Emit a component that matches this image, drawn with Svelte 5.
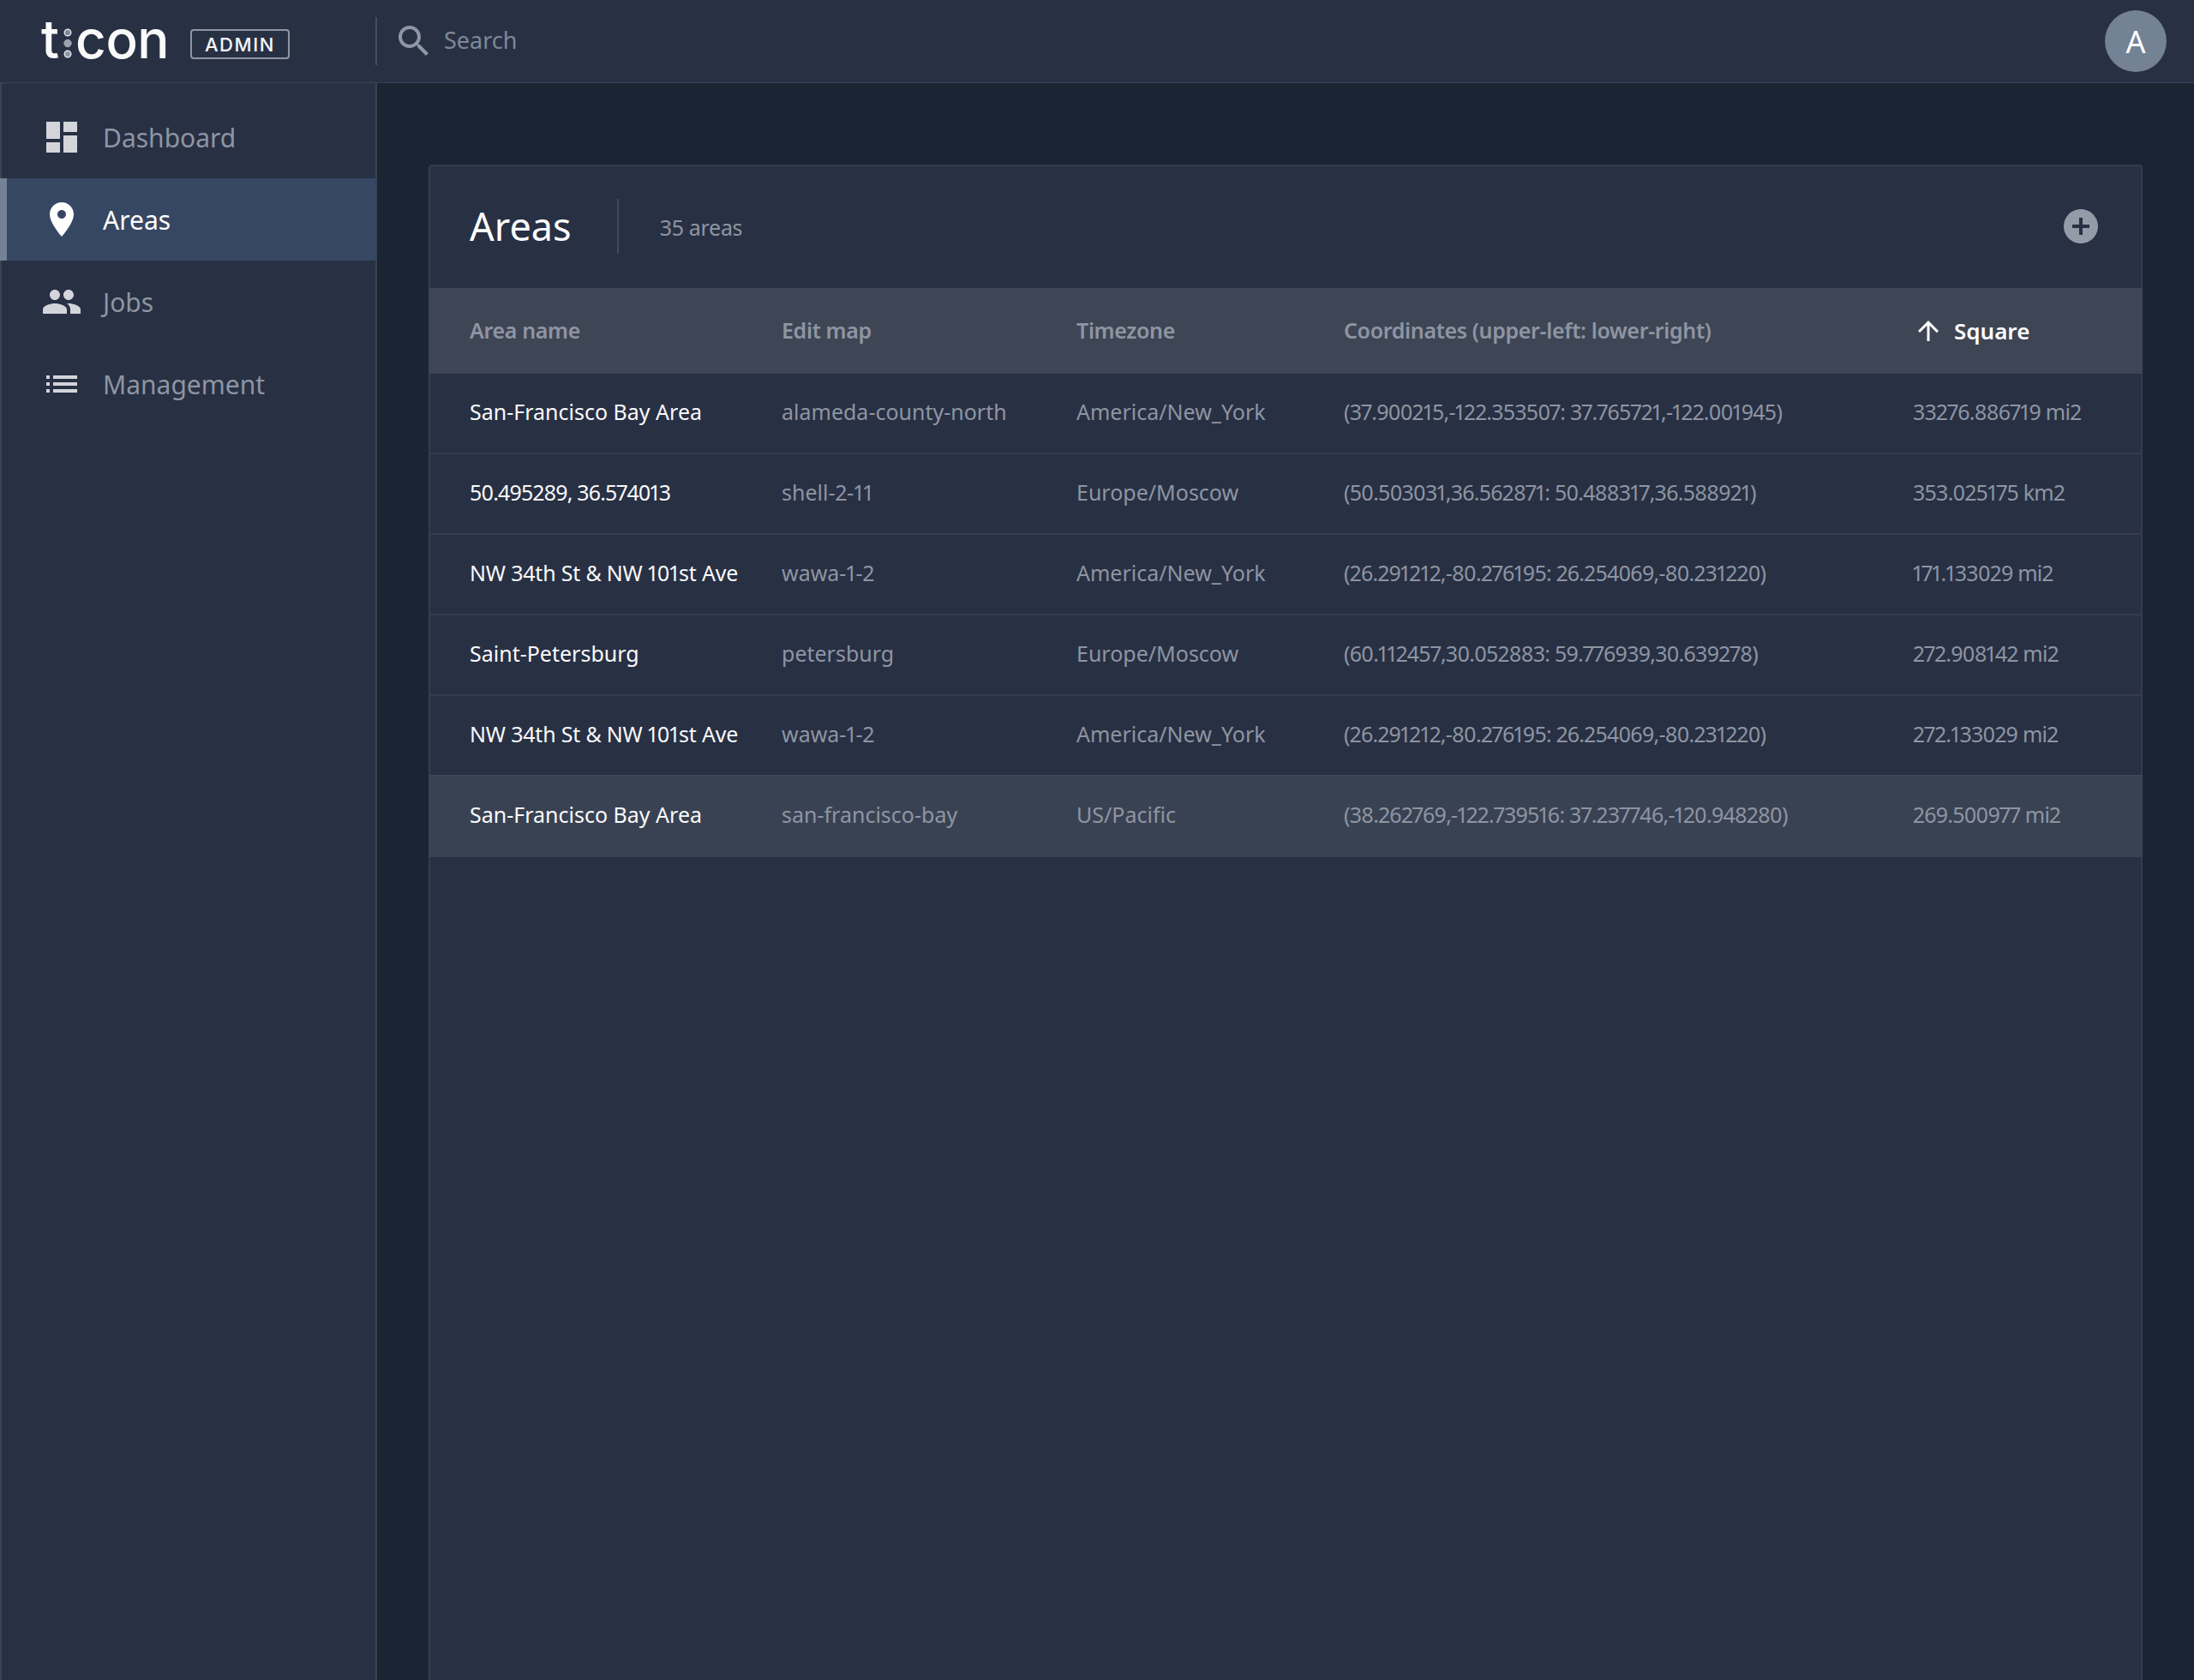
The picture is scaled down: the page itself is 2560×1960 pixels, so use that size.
<script>
  const nav = [
    { label: 'Dashboard', d: 'M3 13h8V3H3v10zm0 8h8v-6H3v6zm10 0h8V11h-8v10zm0-18v6h8V3h-8z' },
    { label: 'Areas', active: true, d: 'M12 2C8.13 2 5 5.13 5 9c0 5.25 7 13 7 13s7-7.75 7-13c0-3.87-3.13-7-7-7zm0 9.5c-1.38 0-2.5-1.12-2.5-2.5s1.12-2.5 2.5-2.5 2.5 1.12 2.5 2.5-1.12 2.5-2.5 2.5z' },
    { label: 'Jobs', d: 'M16 11c1.66 0 2.99-1.34 2.99-3S17.66 5 16 5c-1.66 0-3 1.34-3 3s1.34 3 3 3zm-8 0c1.66 0 2.99-1.34 2.99-3S9.66 5 8 5C6.34 5 5 6.34 5 8s1.34 3 3 3zm0 2c-2.33 0-7 1.17-7 3.5V19h14v-2.5c0-2.33-4.67-3.5-7-3.5zm8 0c-.29 0-.62.02-.97.05 1.16.84 1.97 1.97 1.97 3.45V19h6v-2.5c0-2.33-4.67-3.5-7-3.5z' },
    { label: 'Management', d: 'M3 13h2v-2H3v2zm0 4h2v-2H3v2zm0-8h2V7H3v2zm4 4h14v-2H7v2zm0 4h14v-2H7v2zM7 7v2h14V7H7z' }
  ];
  const rows = [
    ['San-Francisco Bay Area', 'alameda-county-north', 'America/New_York', '(37.900215,-122.353507: 37.765721,-122.001945)', '33276.886719 mi2'],
    ['50.495289, 36.574013', 'shell-2-11', 'Europe/Moscow', '(50.503031,36.562871: 50.488317,36.588921)', '353.025175 km2'],
    ['NW 34th St & NW 101st Ave', 'wawa-1-2', 'America/New_York', '(26.291212,-80.276195: 26.254069,-80.231220)', '171.133029 mi2'],
    ['Saint-Petersburg', 'petersburg', 'Europe/Moscow', '(60.112457,30.052883: 59.776939,30.639278)', '272.908142 mi2'],
    ['NW 34th St & NW 101st Ave', 'wawa-1-2', 'America/New_York', '(26.291212,-80.276195: 26.254069,-80.231220)', '272.133029 mi2'],
    ['San-Francisco Bay Area', 'san-francisco-bay', 'US/Pacific', '(38.262769,-122.739516: 37.237746,-120.948280)', '269.500977 mi2']
  ];
</script>

<div class="page">
  <header class="topbar">
    <div class="brand">
      <span class="logo">
        <span>t</span>
        <svg class="dots" viewBox="0 0 12 35" width="12" height="35" aria-hidden="true">
          <circle cx="6" cy="5" r="3.8" fill="#7f8797" stroke="#e4e6ea" stroke-width="1.4" />
          <circle cx="6" cy="17.5" r="4.2" fill="#9ca2ae" stroke="#b9bdc6" stroke-width="0.8" />
          <circle cx="6" cy="30" r="3.8" fill="#8e95a3" stroke="#e4e6ea" stroke-width="1.4" />
        </svg>
        <span class="con">con</span>
      </span>
      <span class="badge">ADMIN</span>
    </div>
    <div class="search">
      <svg class="search-icon" viewBox="0 0 24 24" aria-hidden="true"><path d="M15.5 14h-.79l-.28-.27C15.41 12.59 16 11.11 16 9.5 16 5.91 13.09 3 9.5 3S3 5.91 3 9.5 5.91 16 9.5 16c1.61 0 3.09-.59 4.23-1.57l.27.28v.79l5 4.99L20.49 19l-4.99-5zm-6 0C7.01 14 5 11.99 5 9.5S7.01 5 9.5 5 14 7.01 14 9.5 11.99 14 9.5 14z" /></svg>
      <span class="search-text">Search</span>
    </div>
    <div class="avatar">A</div>
  </header>

  <div class="body">
    <aside class="sidebar">
      {#each nav as item}
        <div class="nav-item" class:active={item.active}>
          <svg viewBox="0 0 24 24" aria-hidden="true"><path d={item.d} /></svg>
          <span>{item.label}</span>
        </div>
      {/each}
    </aside>

    <main class="main">
      <section class="card">
        <div class="card-head">
          <h1>Areas</h1>
          <span class="count">35 areas</span>
          <svg class="add" viewBox="0 0 24 24" aria-hidden="true"><path d="M12 2C6.48 2 2 6.48 2 12s4.48 10 10 10 10-4.48 10-10S17.52 2 12 2zm5 11h-4v4h-2v-4H7v-2h4V7h2v4h4v2z" /></svg>
        </div>
        <table>
          <colgroup>
            <col class="c1" /><col class="c2" /><col class="c3" /><col class="c4" /><col />
          </colgroup>
          <thead>
            <tr>
              <th>Area name</th>
              <th>Edit map</th>
              <th>Timezone</th>
              <th>Coordinates (upper-left: lower-right)</th>
              <th class="sorted">
                <span class="sort">
                  <svg viewBox="0 0 24 24" aria-hidden="true"><path d="M4 12l1.41 1.41L11 7.83V20h2V7.83l5.58 5.59L20 12l-8-8-8 8z" /></svg>
                  Square
                </span>
              </th>
            </tr>
          </thead>
          <tbody>
            {#each rows as r, i}
              <tr class:hl={i === 5} class:before-hl={i === 4}>
                <td class="name" class:num={/^\d/.test(r[0])} class:mixed={/^NW/.test(r[0])}>{r[0]}</td>
                <td>{r[1]}</td>
                <td>{r[2]}</td>
                <td class="num">{r[3]}</td>
                <td class="num">{r[4]}</td>
              </tr>
            {/each}
          </tbody>
        </table>
      </section>
    </main>
  </div>
</div>

<style>
  :global(body) {
    margin: 0;
    background: #1b2433;
  }
  .page {
    width: 2560px;
    height: 1960px;
    display: flex;
    flex-direction: column;
    overflow: hidden;
    font-family: "Noto Sans", "Open Sans", sans-serif;
    font-variant-numeric: proportional-nums;
    background: #1b2433;
  }
  .topbar {
    height: 96px;
    flex: none;
    display: flex;
    align-items: center;
    background: #283044;
    border-bottom: 1px solid #3a4254;
    padding-right: 32px;
  }
  .brand {
    width: 438px;
    height: 96px;
    box-sizing: border-box;
    flex: none;
    display: flex;
    align-items: center;
    padding-left: 48px;
  }
  .logo {
    display: flex;
    align-items: baseline;
    font-family: Inter, sans-serif;
    font-weight: 500;
    font-size: 62px;
    line-height: 1;
    color: #fafafa;
    width: 174px;
    position: relative;
    top: -2px;
  }
  .con {
    margin-left: 3px;
    letter-spacing: -0.5px;
  }
  .dots {
    margin-left: 4px;
  }
  .badge {
    box-sizing: border-box;
    width: 116px;
    height: 35px;
    border: 2px solid #8f95a2;
    border-radius: 4px;
    display: flex;
    align-items: center;
    justify-content: center;
    color: #f5f5f5;
    font-family: Inter, sans-serif;
    font-weight: 500;
    font-size: 22px;
    letter-spacing: 1.6px;
    margin-top: 7px;
  }
  .search {
    flex: 1;
    height: 56px;
    display: flex;
    align-items: center;
    gap: 11px;
    border-left: 2px solid #464d5f;
    padding-left: 19px;
    color: #7f8796;
    font-size: 27px;
  }
  .search-text {
    margin-bottom: 3px;
  }
  .search-icon {
    width: 48px;
    height: 48px;
    fill: #9097a4;
    flex: none;
  }
  .avatar {
    width: 72px;
    height: 72px;
    border-radius: 50%;
    background: #748295;
    color: #fff;
    display: flex;
    align-items: center;
    justify-content: center;
    font-size: 36px;
    flex: none;
  }
  .body {
    flex: 1;
    display: flex;
    min-height: 0;
  }
  .sidebar {
    width: 440px;
    box-sizing: border-box;
    flex: none;
    background: #283044;
    border-left: 2px solid #3a4254;
    border-right: 2px solid #3a4254;
    padding-top: 15px;
  }
  .nav-item {
    height: 96px;
    display: flex;
    align-items: center;
    gap: 24px;
    padding-left: 46px;
    color: #8e95a2;
    font-size: 30px;
    box-sizing: border-box;
  }
  .nav-item svg {
    width: 48px;
    height: 48px;
    fill: #d3d5da;
    flex: none;
  }
  .nav-item.active {
    margin-left: -2px;
    background: #364763;
    border-left: 8px solid #748295;
    padding-left: 40px;
    color: #fff;
  }
  .nav-item.active svg {
    fill: #fff;
  }
  .main {
    flex: 1;
    min-width: 0;
    padding: 95px 60px 0 60px;
    display: flex;
  }
  .card {
    flex: 1;
    min-width: 0;
    background: #283044;
    border: 2px solid #343c4e;
    border-bottom: 0;
    border-radius: 4px 4px 0 0;
  }
  .card-head {
    height: 142px;
    display: flex;
    align-items: center;
    padding: 0 46px 0 46px;
  }
  h1 {
    margin: 0 48px 2px 0;
    font-weight: 400;
    font-size: 45px;
    color: #fff;
    height: 64px;
    line-height: 63px;
    padding-right: 53px;
    border-right: 2px solid #434a5c;
  }
  .count {
    font-size: 25px;
    letter-spacing: -0.3px;
    color: #8e95a2;
  }
  .add {
    margin-left: auto;
    margin-bottom: 2px;
    width: 48px;
    height: 48px;
    fill: #949aa7;
  }
  table {
    width: calc(100% + 4px);
    margin: 0 -2px;
    table-layout: fixed;
    border-collapse: separate;
    border-spacing: 0;
    font-size: 25px;
  }
  .c1 { width: 412px; }
  .c2 { width: 344px; }
  .c3 { width: 312px; }
  .c4 { width: 664px; }
  th, td {
    text-align: left;
    white-space: nowrap;
    padding: 0 0 3px 0;
    box-sizing: border-box;
  }
  th:first-child, td:first-child {
    padding-left: 48px;
  }
  thead tr {
    background: #3e4555;
  }
  th {
    height: 100px;
    font-weight: 600;
    letter-spacing: -0.35px;
    color: #8e95a2;
  }
  .sorted {
    color: #fff;
    padding-bottom: 0;
    font-size: 26px;
    letter-spacing: 0;
  }
  .sort {
    display: flex;
    align-items: center;
    gap: 12px;
  }
  .sort svg {
    width: 36px;
    height: 36px;
    fill: #fff;
  }
  td {
    height: 94px;
    padding-bottom: 4px;
    border-bottom: 2px solid #343c4e;
    color: #8e95a2;
  }
  .before-hl td {
    border-bottom-color: #3f4758;
  }
  .hl td {
    background: #394253;
    border-bottom-color: #394253;
  }
  .name {
    color: #fafafa;
  }
  .num {
    letter-spacing: -0.75px;
  }
  .name.num {
    letter-spacing: -0.85px;
  }
  .mixed {
    letter-spacing: -0.2px;
  }
</style>
